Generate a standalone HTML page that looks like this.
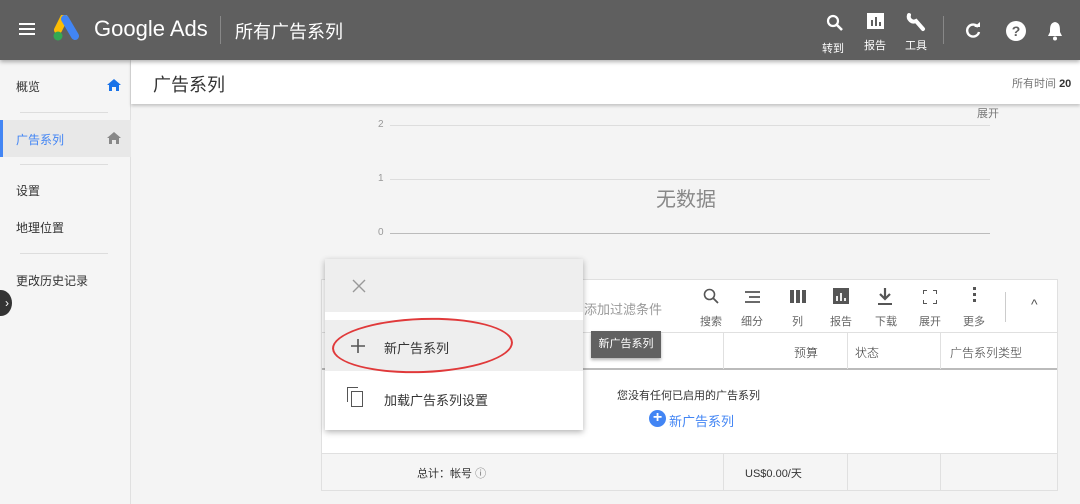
<!DOCTYPE html>
<html><head><meta charset="utf-8"><style>
*{margin:0;padding:0;box-sizing:border-box}
body{width:1080px;height:504px;overflow:hidden;position:relative;background:#f4f4f4;font-family:"Liberation Sans","Noto Sans CJK SC",sans-serif;color:#333}
.a{position:absolute}
.hdr{left:0;top:0;width:1080px;height:60px;background:#5f5f5f;box-shadow:0 2px 4px rgba(0,0,0,.3);z-index:3}
.side{left:0;top:60px;width:131px;height:444px;background:#f5f5f5;border-right:1px solid #e0e0e0}
.t{font-size:12px;white-space:nowrap}
.hr{height:1px;background:#ddd}
.ic{color:#fff;font-size:11px;text-align:center}
.line{height:1px;background:#ddd}
</style></head><body>
<div class="a hdr">
 <div class="a" style="left:19px;top:23px;width:16px;height:2px;background:#fff;box-shadow:0 5px 0 #fff,0 10px 0 #fff"></div>
 <svg class="a" style="left:52px;top:15px" width="30" height="28" viewBox="0 0 30 28"><path d="M12 3 L6 15" stroke="#fbbc04" stroke-width="8" stroke-linecap="round"/><path d="M13 4 L23 21" stroke="#4285f4" stroke-width="8" stroke-linecap="round"/><circle cx="6" cy="21" r="4.5" fill="#34a853"/></svg>
 <div class="a" style="left:94px;top:16px;color:#fff;font-size:22px">Google Ads</div>
 <div class="a" style="left:220px;top:16px;width:1px;height:28px;background:#888"></div>
 <div class="a" style="left:235px;top:18px;color:#fff;font-size:18px">所有广告系列</div>
 <svg class="a" style="left:826px;top:14px" width="18" height="18" viewBox="0 0 18 18"><circle cx="7" cy="7" r="5" stroke="#fff" stroke-width="2.2" fill="none"/><path d="M11 11 L16 16" stroke="#fff" stroke-width="2.6"/></svg>
 <div class="a ic" style="left:822px;top:40px">转到</div>
 <div class="a" style="left:867px;top:13px;width:17px;height:16px;background:#fff"><div class="a" style="left:4px;top:7px;width:2px;height:6px;background:#5f5f5f"></div><div class="a" style="left:8px;top:4px;width:2px;height:9px;background:#5f5f5f"></div><div class="a" style="left:12px;top:9px;width:2px;height:4px;background:#5f5f5f"></div></div>
 <div class="a ic" style="left:864px;top:37px">报告</div>
 <svg class="a" style="left:905px;top:11px" width="22" height="22" viewBox="0 0 22 22"><path d="M4 4 A5 5 0 0 0 11 10 L18 18" stroke="#fff" stroke-width="4" fill="none" stroke-linecap="round"/></svg>
 <div class="a ic" style="left:905px;top:37px">工具</div>
 <div class="a" style="left:943px;top:16px;width:1px;height:28px;background:#888"></div>
 <svg class="a" style="left:964px;top:21px" width="18" height="18" viewBox="0 0 18 18"><path d="M14 6 A6 6 0 1 0 15 11" stroke="#fff" stroke-width="2.4" fill="none"/><path d="M10 6 L16 6 L16 1Z" fill="#fff"/></svg>
 <div class="a" style="left:1006px;top:21px;width:20px;height:20px;border-radius:50%;background:#fff;color:#5f5f5f;font-size:14px;font-weight:bold;text-align:center;line-height:20px">?</div>
 <svg class="a" style="left:1046px;top:20px" width="18" height="22" viewBox="0 0 18 22"><path d="M9 2 C4 3 4 7 4 12 L2 16 L16 16 L14 12 C14 7 14 3 9 2Z" fill="#fff"/><circle cx="9" cy="18.5" r="2" fill="#fff"/></svg>
</div>
<div class="a side">
 <div class="a t" style="left:16px;top:18px">概览</div>
 <svg class="a" style="left:107px;top:19px" width="14" height="12" viewBox="0 0 14 12"><path d="M7 0 L14 6 L12 6 L12 12 L9 12 L9 8 L5 8 L5 12 L2 12 L2 6 L0 6Z" fill="#1a73e8"/></svg>
 <div class="a hr" style="left:20px;top:52px;width:88px"></div>
 <div class="a" style="left:0;top:60px;width:131px;height:37px;background:#e8e8e8;border-left:3px solid #4285f4"></div>
 <div class="a t" style="left:16px;top:71px;color:#4285f4">广告系列</div>
 <svg class="a" style="left:107px;top:72px" width="14" height="12" viewBox="0 0 14 12"><path d="M7 0 L14 6 L12 6 L12 12 L9 12 L9 8 L5 8 L5 12 L2 12 L2 6 L0 6Z" fill="#888"/></svg>
 <div class="a hr" style="left:20px;top:104px;width:88px"></div>
 <div class="a t" style="left:16px;top:122px">设置</div>
 <div class="a t" style="left:16px;top:159px">地理位置</div>
 <div class="a hr" style="left:20px;top:193px;width:88px"></div>
 <div class="a t" style="left:16px;top:212px">更改历史记录</div>
 <div class="a" style="left:-10px;top:230px;width:22px;height:26px;border-radius:50%;background:#333;color:#fff;font-size:12px;line-height:26px;text-align:right;padding-right:3px">›</div>
</div>
<div class="a" style="left:131px;top:60px;width:949px;height:44px;background:#fff;box-shadow:0 2px 3px rgba(0,0,0,.2);z-index:2">
 <div class="a" style="left:22px;top:11px;font-size:18px;color:#333">广告系列</div>
 <div class="a t" style="left:881px;top:15px;color:#777;font-size:11px">所有时间 <b style="color:#333">20</b></div>
</div>
<div class="a t" style="left:977px;top:105px;color:#777;font-size:11px">展开</div>
<div class="a t" style="left:378px;top:119px;color:#999;font-size:10px">2</div>
<div class="a line" style="left:390px;top:125px;width:600px"></div>
<div class="a t" style="left:378px;top:173px;color:#999;font-size:10px">1</div>
<div class="a line" style="left:390px;top:179px;width:600px"></div>
<div class="a t" style="left:378px;top:227px;color:#999;font-size:10px">0</div>
<div class="a line" style="left:390px;top:233px;width:600px;background:#bbb"></div>
<div class="a" style="left:656px;top:183px;font-size:20px;color:#888">无数据</div>

<div class="a" style="left:321px;top:279px;width:737px;height:212px;background:#fff;border:1px solid #e0e0e0">
 <div class="a t" style="left:262px;top:19px;color:#999;font-size:13px">添加过滤条件</div>
 <div class="a" style="left:0;top:52px;width:735px;height:38px;border-bottom:2px solid #bbb;border-top:1px solid #e0e0e0"></div>
 <div class="a" style="left:401px;top:53px;width:1px;height:36px;background:#e0e0e0"></div>
 <div class="a" style="left:525px;top:53px;width:1px;height:36px;background:#e0e0e0"></div>
 <div class="a" style="left:618px;top:53px;width:1px;height:36px;background:#e0e0e0"></div>
 <div class="a t" style="left:472px;top:64px;font-weight:300">预算</div>
 <div class="a t" style="left:533px;top:64px;font-weight:300">状态</div>
 <div class="a t" style="left:628px;top:64px;font-weight:300">广告系列类型</div>
 <div class="a t" style="left:295px;top:107px;font-size:11px">您没有任何已启用的广告系列</div>
 <div class="a" style="left:327px;top:130px;width:17px;height:17px;border-radius:50%;background:#4285f4;color:#fff;font-size:16px;line-height:16px;text-align:center;font-weight:bold">+</div>
 <div class="a t" style="left:347px;top:131px;color:#4285f4;font-size:13px">新广告系列</div>
 <div class="a" style="left:0;top:173px;width:735px;height:37px;background:#f5f5f5;border-top:1px solid #e0e0e0"></div>
 <div class="a" style="left:401px;top:173px;width:1px;height:37px;background:#e0e0e0"></div>
 <div class="a" style="left:525px;top:173px;width:1px;height:37px;background:#e0e0e0"></div>
 <div class="a" style="left:618px;top:173px;width:1px;height:37px;background:#e0e0e0"></div>
 <div class="a t" style="left:95px;top:185px;font-size:11px">总计：帐号 <span style="color:#777">ⓘ</span></div>
 <div class="a t" style="left:423px;top:185px;font-size:11px">US$0.00/天</div>
 <div class="a" style="left:683px;top:12px;width:1px;height:30px;background:#ccc"></div>
 <div class="a" style="left:709px;top:16px;color:#555;font-size:14px">^</div>
</div>
<div class="a" style="left:380px;top:287px;width:620px;color:#666;font-size:11px">
 <svg class="a" style="left:323px;top:1px" width="16" height="16"><circle cx="6.5" cy="6.5" r="5" stroke="#555" stroke-width="1.6" fill="none"/><path d="M10 10 L15 15" stroke="#555" stroke-width="1.8"/></svg>
 <div class="a" style="left:320px;top:26px">搜索</div>
 <svg class="a" style="left:365px;top:4px" width="16" height="12"><path d="M0 1H15M4 6H15M0 11H15" stroke="#555" stroke-width="1.8"/></svg>
 <div class="a" style="left:361px;top:26px">细分</div>
 <svg class="a" style="left:410px;top:3px" width="16" height="13"><path d="M0 0H4V13H0ZM6 0H10V13H6ZM12 0H16V13H12Z" fill="#555"/></svg>
 <div class="a" style="left:412px;top:26px">列</div>
 <svg class="a" style="left:453px;top:1px" width="16" height="16"><rect width="16" height="16" fill="#555"/><path d="M4 8V13M8 5V13M12 10V13" stroke="#fff" stroke-width="1.8"/></svg>
 <div class="a" style="left:450px;top:26px">报告</div>
 <svg class="a" style="left:498px;top:1px" width="14" height="17"><path d="M7 0V10M2 6L7 11L12 6" stroke="#555" stroke-width="2.2" fill="none"/><path d="M0 16H14" stroke="#555" stroke-width="2"/></svg>
 <div class="a" style="left:495px;top:26px">下载</div>
 <svg class="a" style="left:543px;top:3px" width="14" height="14"><path d="M0 4V0H4M10 0H14V4M14 10V14H10M4 14H0V10" stroke="#555" stroke-width="2" fill="none"/></svg>
 <div class="a" style="left:539px;top:26px">展开</div>
 <div class="a" style="left:593px;top:0;width:3px;height:3px;background:#555;box-shadow:0 6px 0 #555,0 12px 0 #555"></div>
 <div class="a" style="left:583px;top:26px">更多</div>
</div>
<div class="a" style="left:591px;top:331px;width:70px;height:27px;background:#616161;color:#fff;font-size:11px;line-height:27px;text-align:center;box-shadow:0 2px 3px rgba(0,0,0,.3)">新广告系列</div>

<div class="a" style="left:325px;top:259px;width:258px;height:171px;background:#fff;box-shadow:0 2px 6px rgba(0,0,0,.3)">
 <div class="a" style="left:0;top:0;width:258px;height:53px;background:#eee"></div>
 <svg class="a" style="left:27px;top:20px" width="14" height="14"><path d="M1 1L13 13M13 1L1 13" stroke="#999" stroke-width="1.4"/></svg>
 <div class="a" style="left:0;top:61px;width:258px;height:51px;background:#eee"></div>
 <svg class="a" style="left:26px;top:80px" width="14" height="14"><path d="M7 0V14M0 7H14" stroke="#555" stroke-width="1.6"/></svg>
 <div class="a" style="left:59px;top:79px;font-size:13px">新广告系列</div>
 <div class="a" style="left:22px;top:128px;width:11px;height:15px;border-left:1.5px solid #555;border-top:1.5px solid #555"></div>
 <div class="a" style="left:26px;top:132px;width:12px;height:16px;border:1.5px solid #555"></div>
 <div class="a" style="left:59px;top:131px;font-size:13px">加载广告系列设置</div>
</div>
<div class="a" style="left:332px;top:318px;width:181px;height:55px;border:2px solid #e0393a;border-radius:50%;transform:rotate(-2deg)"></div>
</body></html>
